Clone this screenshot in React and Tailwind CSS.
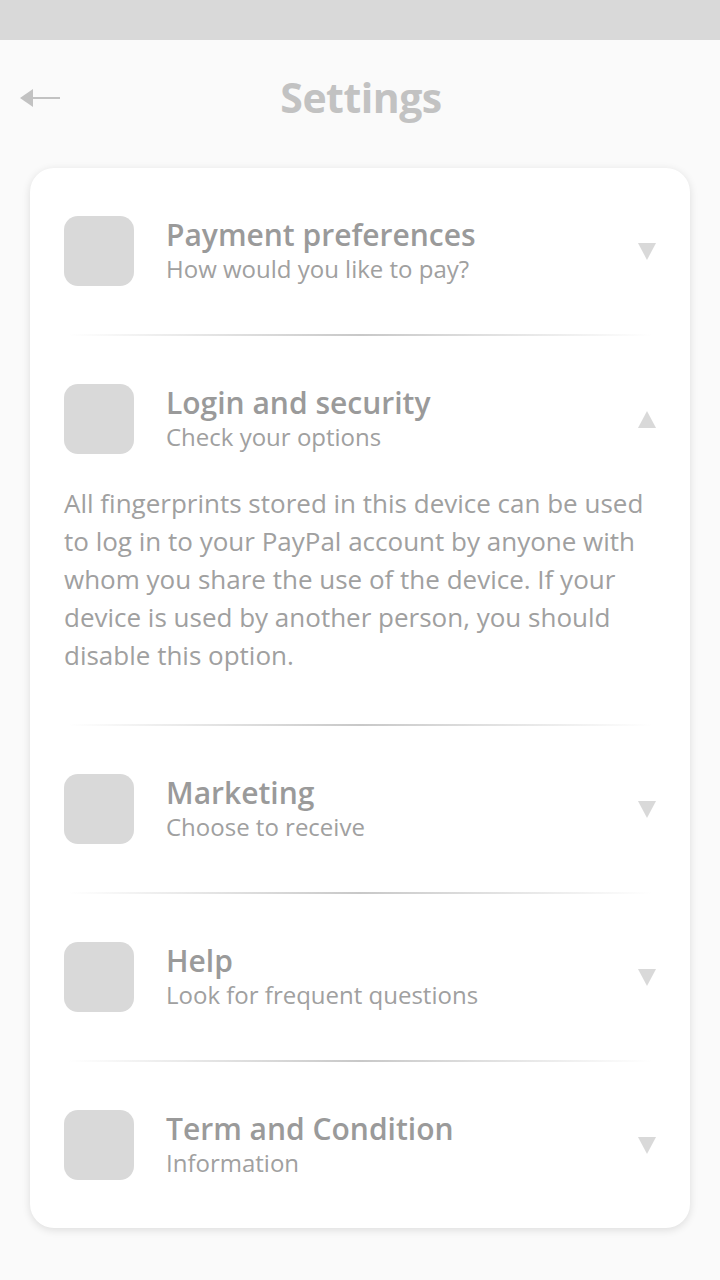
import { useState } from "react";

const items = [
  { title: "Payment preferences", sub: "How would you like to pay?" },
  {
    title: "Login and security",
    sub: "Check your options",
    body: "All fingerprints stored in this device can be used to log in to your PayPal account by anyone with whom you share the use of the device. If your device is used by another person, you should disable this option.",
  },
  { title: "Marketing", sub: "Choose to receive" },
  { title: "Help", sub: "Look for frequent questions" },
  { title: "Term and Condition", sub: "Information" },
];

function Caret({ up }) {
  return (
    <svg width="18" height="17" viewBox="0 0 18 17" className="shrink-0">
      {up ? (
        <polygon points="9,0 18,17 0,17" fill="#d9d9d9" />
      ) : (
        <polygon points="0,0 18,0 9,17" fill="#d9d9d9" />
      )}
    </svg>
  );
}

function Divider() {
  return (
    <div className="h-[2px] mx-[4px] bg-gradient-to-r from-transparent via-[#c8c8c8] to-transparent" />
  );
}

export default function App() {
  const [open, setOpen] = useState(1);

  return (
    <div
      className="min-h-[1280px] bg-[#fafafa]"
      style={{ fontFamily: '"Open Sans", "Noto Sans", sans-serif' }}
    >
      {/* status bar */}
      <div className="h-[40px] bg-[#d9d9d9]" />

      {/* header */}
      <div className="relative h-[128px] flex items-center justify-center">
        <button className="absolute left-[20px] top-[49px]">
          <svg width="42" height="18" viewBox="0 0 42 18">
            <polygon points="0,9 13,0 13,18" fill="#c2c2c2" />
            <rect x="12" y="8" width="28" height="2" fill="#c2c2c2" />
          </svg>
        </button>
        <h1 className="text-[41px] font-bold text-[#c2c2c2] tracking-[-0.5px] -mt-[12px] ml-[2px]">
          Settings
        </h1>
      </div>

      {/* card */}
      <div className="mx-[30px] bg-white rounded-[24px] shadow-[0_2px_8px_rgba(0,0,0,0.12)] px-[34px] pt-[48px] pb-[48px]">
        {items.map((it, i) => (
          <div key={it.title}>
            {i > 0 && <Divider />}
            <div className={i > 0 ? "pt-[48px]" : ""}>
              <div
                className="flex items-center cursor-pointer"
                onClick={() => setOpen(open === i ? -1 : i)}
              >
                <div className="w-[70px] h-[70px] rounded-[14px] bg-[#d9d9d9] shrink-0" />
                <div className="flex-1 ml-[32px] -mt-[1px]">
                  <div className="text-[30px] leading-[36px] font-semibold text-[#9a9a9a]">
                    {it.title}
                  </div>
                  <div className="text-[24px] leading-[32px] text-[#a0a0a0]">
                    {it.sub}
                  </div>
                </div>
                <Caret up={open === i} />
              </div>
              {open === i && it.body && (
                <p className="mt-[30px] text-[26px] leading-[38px] text-[#a0a0a0]">
                  {it.body}
                </p>
              )}
              <div className={i < items.length - 1 ? "h-[48px]" : ""} />
              {open === i && it.body && <div className="h-[2px]" />}
            </div>
          </div>
        ))}
      </div>
    </div>
  );
}
